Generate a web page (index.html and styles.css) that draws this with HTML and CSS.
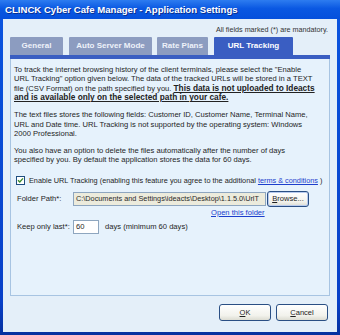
FILE: index.html
```html
<!DOCTYPE html>
<html lang="en">
<head>
    <meta charset="UTF-8">
    <title>CLINCK Cyber Cafe Manager - Application Settings</title>
    <link rel="stylesheet" href="styles.css">
</head>
<body>
    <div class="window">
        <div class="titlebar">CLINCK Cyber Cafe Manager - Application Settings</div>
        <div class="client">
            <div class="note">All fields marked (*) are mandatory.</div>

            <div class="tabs">
                <div class="tab tab-general">General</div>
                <div class="tab tab-auto">Auto Server Mode</div>
                <div class="tab tab-rate">Rate Plans</div>
                <div class="tab tab-url active">URL Tracking</div>
            </div>
            <div class="tab-band"></div>

            <div class="panel">
                <!-- line breaks kept as in the original dialog -->
                <p>To track the internet browsing history of the client terminals, please select the "Enable<br>
                URL Tracking" option given below. The data of the tracked URLs will be stored in a TEXT<br>
                file (CSV Format) on the path specified by you. <b class="warn">This data is not uploaded to Ideacts<br>
                and is available only on the selected path in your cafe.</b></p>
                <p>The text files stores the following fields: Customer ID, Customer Name, Terminal Name,<br>
                URL and Date time. URL Tracking is not supported by the operating system: Windows<br>
                2000 Professional.</p>
                <p>You also have an option to delete the files automatically after the number of days<br>
                specified by you. By default the application stores the data for 60 days.</p>

                <div class="check-row">
                    <span class="checkbox">
                        <svg width="7" height="7" viewBox="0 0 7 7"><path d="M1 3.2 L2.8 5 L6 1.4" fill="none" stroke="#3a8a2a" stroke-width="1.4"/></svg>
                    </span>
                    <span>Enable URL Tracking (enabling this feature you agree to the additional <a class="link" href="#">terms &amp; conditions</a> )</span>
                </div>

                <div class="form">
                    <div class="form-row">
                        <span class="label">Folder Path*:</span>
                        <span class="input path">C:\Documents and Settings\ideacts\Desktop\1.1.5.0\UrlT</span>
                        <span class="btn browse"><u>B</u>rowse...</span>
                    </div>
                    <div class="open-row"><a class="link" href="#">Open this folder</a></div>
                    <div class="form-row">
                        <span class="label">Keep only last*:</span>
                        <span class="input days">60</span>
                        <span class="days-note">days (minimum 60 days)</span>
                    </div>
                </div>
            </div>

            <div class="buttons">
                <span class="btn big"><u>O</u>K</span>
                <span class="btn big"><u>C</u>ancel</span>
            </div>
        </div>
    </div>
</body>
</html>
```

FILE: styles.css
```css
html, body {
    margin: 0;
    padding: 0;
    background: #0b3fc4;
}
.window {
    width: 340px;
    height: 335px;
    box-sizing: border-box;
    background: linear-gradient(#0b55e0, #0840c8 90%, #06309e);
    font-family: "Liberation Sans", Arial, sans-serif;
    color: #1e1e1e;
    overflow: hidden;
}
.titlebar {
    height: 19px;
    line-height: 20px;
    padding-left: 5px;
    color: #fff;
    font-weight: bold;
    font-size: 9.6px;
    background: linear-gradient(#2d7cf0, #0a58e2 45%, #0550dc);
    text-shadow: 1px 1px 0 #0a2f90;
}
.client {
    margin: 0 3px;
    height: 313px;
    background: #e4eff9;
    overflow: hidden;
}
.note {
    padding-top: 6px;
    height: 9px;
    line-height: 9px;
    font-size: 7.2px;
    text-align: right;
    padding-right: 9px;
    color: #333;
}
.tabs {
    display: flex;
    margin-top: 3px;
    height: 18px;
    padding-left: 7px;
}
.tab {
    height: 18px;
    line-height: 18px;
    text-align: center;
    color: #eef2fa;
    font-weight: bold;
    font-size: 8px;
    background: #8c9cc0;
    border-radius: 1px 1px 0 0;
}
.tab-general { width: 53px; }
.tab-auto { width: 83px; margin-left: 6px; }
.tab-rate { width: 51px; margin-left: 5px; }
.tab-url { width: 79px; margin-left: 6px; }
.tab.active {
    background: #3a5ec2;
    color: #fff;
}
.tab-band {
    margin: 0 7px;
    height: 4px;
    background: #3a5ec2;
}
.panel {
    margin: 0 7px;
    height: 237px;
    box-sizing: border-box;
    border: 1px solid #a7c4e2;
    border-top: none;
    background: #e6f2fc;
    padding: 6px 3px 0 3px;
    font-size: 7.6px;
    line-height: 9.4px;
    white-space: nowrap;
}
.panel p {
    margin: 0 0 7.6px 0;
}
.warn {
    text-decoration: underline;
    font-size: 8.3px;
    color: #222;
}
.link {
    color: #1c3ecc;
    text-decoration: underline;
}
.check-row {
    display: flex;
    align-items: center;
    gap: 4px;
    margin-top: 10px;
    padding-left: 2px;
    height: 12px;
    font-size: 7.3px;
}
.checkbox {
    width: 7px;
    height: 7px;
    border: 1px solid #1e4e80;
    background: #fff;
    display: flex;
    align-items: center;
    justify-content: center;
}
.form {
    margin-top: 4px;
    padding-left: 3px;
}
.form-row {
    display: flex;
    align-items: center;
    height: 16px;
}
.label {
    width: 56px;
}
.input {
    height: 14px;
    box-sizing: border-box;
    border: 1px solid #8ea6bf;
    line-height: 12px;
    padding-left: 2px;
    overflow: hidden;
}
.path {
    width: 193px;
    background: #ecebdc;
    color: #2a2a2a;
    font-size: 7.3px;
}
.days {
    width: 26px;
    background: #fff;
}
.days-note {
    margin-left: 6px;
}
.btn {
    display: flex;
    align-items: center;
    justify-content: center;
    box-sizing: border-box;
    border: 1px solid #2a4f84;
    border-radius: 3px;
    background: linear-gradient(#ffffff, #f2f2ec 70%, #dcdcd2);
    color: #1e1e1e;
}
.browse {
    width: 42px;
    height: 16px;
    margin-left: 1px;
    box-shadow: inset 0 0 0 1px #b8cbee;
}
.open-row {
    height: 12px;
    line-height: 12px;
    padding-left: 194px;
}
.buttons {
    display: flex;
    justify-content: flex-end;
    gap: 5px;
    margin-top: 8px;
    padding-right: 9px;
}
.big {
    width: 52px;
    height: 17px;
    font-size: 7.5px;
}
```
